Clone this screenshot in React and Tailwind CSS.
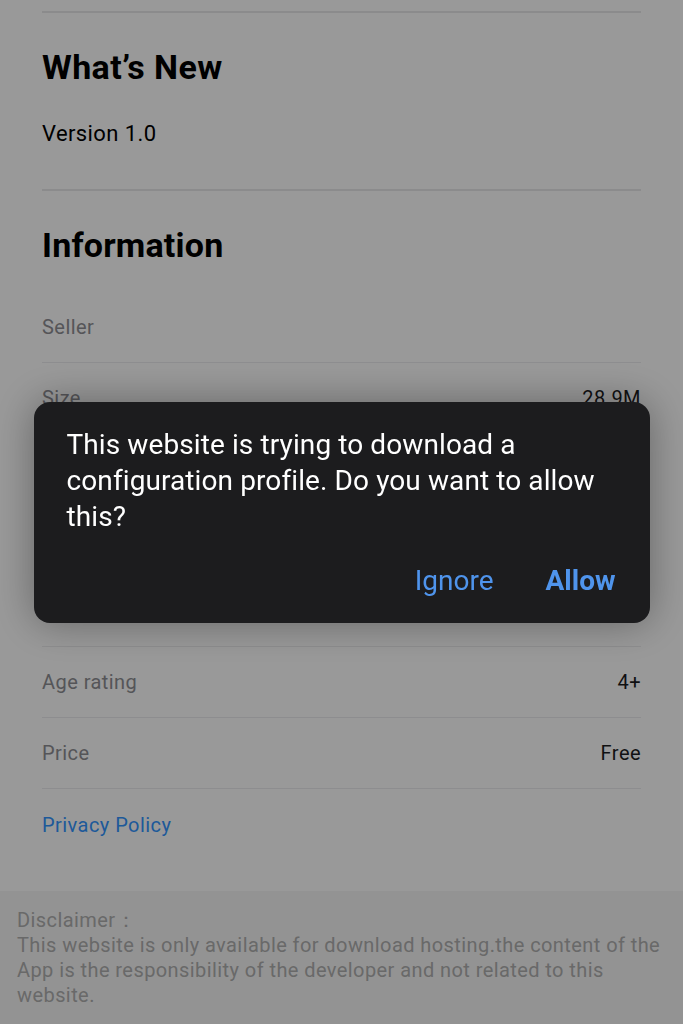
import React from 'react';

const rows = [
  { label: 'Seller', value: '' },
  { label: 'Size', value: '28.9M' },
  { label: 'Category', value: 'Utilities' },
  { label: 'Compatibility', value: 'iOS 11.0+' },
  { label: 'Languages', value: 'English' },
  { label: 'Age rating', value: '4+' },
  { label: 'Price', value: 'Free' },
];

const App = () => {
  return (
    <div className="relative min-h-[1024px] flex flex-col bg-white font-['Roboto',sans-serif] overflow-hidden">
      <div className="px-[42px] pt-[11px]">
        {/* What's New */}
        <div className="border-t-2 border-[#e8e8ea]">
          <h2 className="pt-[34px] text-[34px] leading-[40px] font-bold tracking-[0.4px] text-black">What’s New</h2>
          <p className="mt-[33px] text-[22px] leading-[28px] tracking-[0.4px] text-black">Version 1.0</p>
        </div>

        {/* Information */}
        <div className="mt-[41px] border-t-2 border-[#e8e8ea]">
          <h2 className="pt-[34px] text-[34px] leading-[40px] font-bold tracking-[0.2px] text-black">Information</h2>
          <ul className="mt-[27px]">
            {rows.map((row) => (
              <li
                key={row.label}
                className="flex justify-between items-center h-[71px] border-b border-[#ececee] text-[20px] tracking-[0.45px]"
              >
                <span className="text-[#8e8e93]">{row.label}</span>
                <span className="text-[#1c1c1e]">{row.value}</span>
              </li>
            ))}
            <li className="flex items-center h-[71px] text-[20px] tracking-[0.45px]">
              <span className="text-[#3395ff]">Privacy Policy</span>
            </li>
          </ul>
        </div>
      </div>

      {/* Disclaimer */}
      <div className="flex-1 mt-[31px] bg-[#f6f6f6] px-[17px] pt-[17px] pb-[20px] text-[20px] leading-[25px] tracking-[0.42px] text-[#afafaf]">
        <p>Disclaimer：</p>
        <p>
          This website is only available for download hosting.the content of the App is the responsibility of the
          developer and not related to this website.
        </p>
      </div>

      {/* Overlay + dialog */}
      <div className="fixed inset-0 bg-black/40 flex items-center justify-center">
        <div className="w-[616px] rounded-[16px] bg-[#1c1c1e] shadow-[0_0_40px_rgba(0,0,0,0.35)] pl-[33px] pr-[34px] pt-[25px] pb-[24px]">
          <p className="text-[28px] leading-[36px] tracking-[0.1px] text-white">
            This website is trying to download a configuration profile. Do you want to allow this?
          </p>
          <div className="mt-[28px] flex justify-end gap-[52px] text-[28px] leading-[36px] text-[#4f94ec]">
            <button>Ignore</button>
            <button className="font-bold">Allow</button>
          </div>
        </div>
      </div>
    </div>
  );
};

export default App;
